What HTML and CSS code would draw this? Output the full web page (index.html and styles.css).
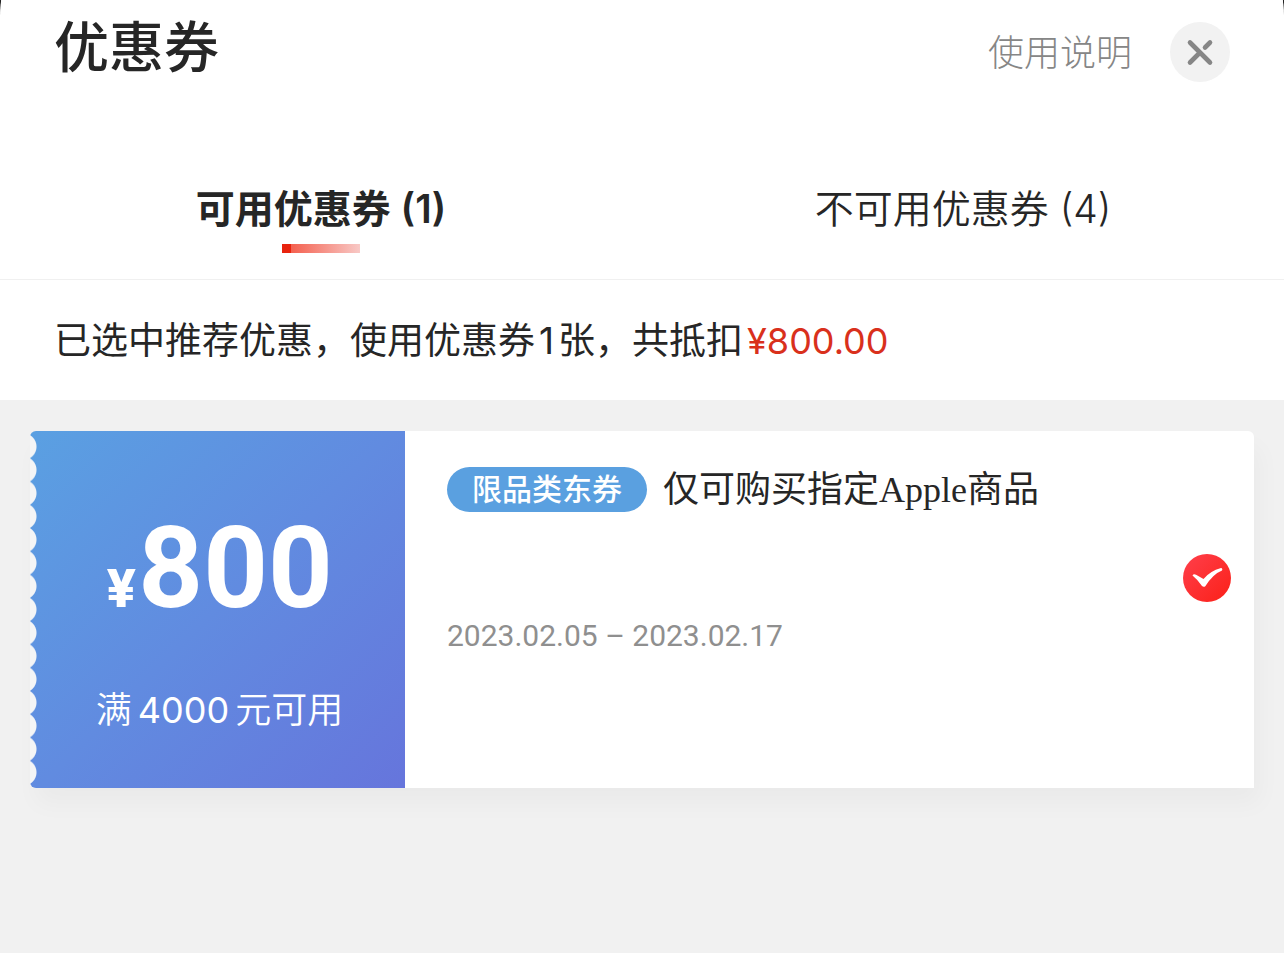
FILE: index.html
```
<!DOCTYPE html>
<html lang="zh-CN">
<head>
    <meta charset="UTF-8">
    <meta name="viewport" content="width=device-width, initial-scale=1.0">
    <title>优惠券</title>
    <link rel="stylesheet" href="styles.css">
</head>
<body>
    <div class="sheet">
        <header class="header">
            <h1>优惠券</h1>
            <div class="header-actions">
                <a href="#help" class="help">使用说明</a>
                <button class="close" type="button" aria-label="关闭">
                    <svg viewBox="0 0 60 60" fill="none" stroke="#868686" stroke-width="4.600" stroke-linecap="round">
                        <path d="M20 20.500L40 40.500M20 40.500L30 30.500M35 25.500L40 20.500"/>
                    </svg>
                </button>
            </div>
        </header>

        <nav class="tabs">
            <button class="tab active" type="button">可用优惠券 (1)</button>
            <button class="tab" type="button">不可用优惠券 (4)</button>
        </nav>

        <p class="summary">已选中推荐优惠，使用优惠券<span class="count">1</span>张，共抵扣<span class="price">¥800.00</span></p>
    </div>

    <main class="coupons">
        <article class="coupon">
            <div class="coupon-value">
                <p class="amount"><span class="currency">¥</span>800</p>
                <p class="condition">满<span class="limit">4000</span>元可用</p>
            </div>
            <div class="coupon-info">
                <div class="coupon-text">
                    <h2><span class="tag">限品类东券</span><span class="name">仅可购买指定Apple商品</span></h2>
                    <p class="date">2023.02.05 – 2023.02.17</p>
                </div>
                <label class="check">
                    <input type="checkbox" checked aria-label="选择优惠券">
                    <svg viewBox="0 0 48 48">
                        <defs>
                            <linearGradient id="red" x1="0" y1="0" x2="1" y2="1">
                                <stop offset="0" stop-color="#ff3f4b"/>
                                <stop offset="1" stop-color="#fb2018"/>
                            </linearGradient>
                        </defs>
                        <circle cx="24" cy="24" r="24" fill="url(#red)"/>
                        <path d="M9.500 21.500Q10.500 19.500 13 20.700L20.500 25Q27 17 38 14Q40 14.500 39 16.500Q30 20 22.300 32.300Q20.500 33.500 19 32Q14.500 25.500 9.500 21.500Z" fill="#fff"/>
                    </svg>
                </label>
            </div>
        </article>
    </main>
</body>
</html>
```
FILE: styles.css
```
* {
    box-sizing: border-box;
}
body {
    margin: 0;
    min-height: 100vh;
    background: #f1f1f1;
    font-family: Inter, "Noto Sans CJK SC", sans-serif;
    font-size: 36px;
    color: #262626;
}
h1, h2, p {
    margin: 0;
    font-weight: 400;
}
button {
    padding: 0;
    border: 0;
    background: none;
    font-family: inherit;
    color: inherit;
    cursor: pointer;
}

/* top sheet */
.sheet {
    background:
        linear-gradient(#222, #222) left top / 1px 16px no-repeat,
        linear-gradient(#222, #222) right top / 1px 16px no-repeat;
}
.header {
    display: flex;
    justify-content: space-between;
    align-items: flex-start;
    height: 160px;
    padding: 6px 54px 0;
    background: #fff;
    border-radius: 2px 2px 0 0 / 16px 16px 0 0;
}
h1 {
    font-size: 55px;
    line-height: 82px;
    font-weight: 500;
}
.header-actions {
    display: flex;
    align-items: center;
    gap: 38px;
    padding-top: 15px;
}
.help {
    padding-top: 2px;
    color: #868686;
    font-weight: 300;
    line-height: 60px;
    text-decoration: none;
}
.close {
    width: 60px;
    height: 60px;
    border-radius: 50%;
    background: #f2f2f2;
}
.close svg {
    display: block;
}

.tabs {
    display: flex;
    height: 120px;
    background: #fff;
    border-bottom: 1px solid #f0f0f0;
}
.tab {
    position: relative;
    flex: 1;
    padding-bottom: 28px;
    font-size: 39px;
    font-weight: 350;
}
.tab.active {
    font-weight: 600;
}
.tab.active::after {
    content: "";
    position: absolute;
    left: 50%;
    bottom: 26px;
    width: 78px;
    height: 9px;
    margin-left: -39px;
    background: linear-gradient(90deg, #e8230e 9px, #f4604f 9px, #f8c9c6);
}

.summary {
    padding: 2px 54px 0;
    background: #fff;
    font-size: 37px;
    line-height: 118px;
}
.count {
    margin: 0 4px;
}
.price {
    margin-left: 4px;
    font-size: 36px;
    color: #d9301c;
}

/* coupon list */
.coupons {
    padding: 31px 30px;
}
.coupon {
    display: flex;
    min-height: 357px;
    border-radius: 6px 6px 0 0;
    box-shadow: 6px 16px 24px rgba(0, 0, 0, 0.03);
}
.coupon-value {
    position: relative;
    display: flex;
    flex-direction: column;
    align-items: center;
    width: 375px;
    padding: 72px 0 0 4px;
    color: #fff;
    background: linear-gradient(135deg, #5aa0e2, #618be0 50%, #6675dc);
    border-radius: 6px 0 0 6px;
}
/* perforated edge */
.coupon-value::before {
    content: "";
    position: absolute;
    top: 4px;
    bottom: 4px;
    left: 0;
    width: 8px;
    background: radial-gradient(circle at -7px 50%, #f4f5f6 13px, transparent 14px) left top / 8px 23px no-repeat round;
}
.amount {
    font-family: Roboto, sans-serif;
    font-size: 113px;
    line-height: 132px;
    font-weight: 700;
}
.currency {
    margin-right: 2px;
    font-family: Inter, sans-serif;
    font-size: 52px;
    font-weight: 800;
}
.condition {
    margin-top: 28px;
    font-weight: 350;
    line-height: 54px;
}
.limit {
    margin: 0 6px;
    font-weight: 400;
}
.coupon-info {
    display: flex;
    flex: 1;
    justify-content: space-between;
    align-items: flex-start;
    padding: 30px 23px 0 42px;
    background: #fff;
    border-radius: 0 6px 0 0;
}
h2 {
    display: flex;
    align-items: center;
    gap: 16px;
    font-size: 36px;
    line-height: 54px;
}
.tag {
    padding: 0 25px;
    border-radius: 23px;
    background: #5aa0e0;
    color: #fff;
    font-size: 30px;
    line-height: 45px;
    font-weight: 500;
}
.name {
    padding-top: 2px;
    font-family: "Liberation Serif", "Noto Sans CJK SC", serif;
}
.date {
    margin-top: 95px;
    font-family: Roboto, sans-serif;
    font-size: 30px;
    line-height: 48px;
    font-weight: 400;
    color: #8f8f8f;
}
.check {
    display: grid;
    margin-top: 93px;
    cursor: pointer;
}
.check input,
.check svg {
    grid-area: 1 / 1;
    width: 48px;
    height: 48px;
    margin: 0;
}
.check input {
    appearance: none;
    border: 2px solid #ccc;
    border-radius: 50%;
}
.check svg {
    visibility: hidden;
}
.check input:checked {
    border-color: transparent;
}
.check input:checked + svg {
    visibility: visible;
}
```
